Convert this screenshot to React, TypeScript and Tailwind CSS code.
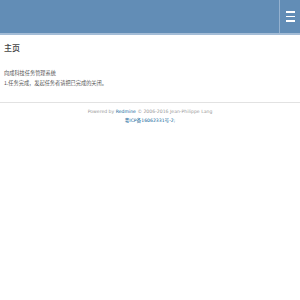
import React from 'react';

const Header: React.FC = () => (
  <div className="flex h-[35px] bg-[#628db6] border-b-2 border-[#a3bcd6]">
    <div className="flex-1" />
    <div className="w-[21px] border-l border-[#94b1cf] flex flex-col items-center pt-[11px] gap-[3px]">
      <span className="block w-[9px] h-[1.5px] bg-white" />
      <span className="block w-[9px] h-[1.5px] bg-white" />
      <span className="block w-[9px] h-[1.5px] bg-white" />
    </div>
  </div>
);

const App: React.FC = () => {
  return (
    <div className="w-[300px] h-[300px] bg-white font-['DejaVu_Sans','Noto_Sans_CJK_SC',sans-serif] overflow-hidden">
      <Header />
      <div className="px-[4px] pt-[8px] pb-[14px]">
        <h2 className="text-[8px] leading-[10px] font-medium text-[#444] font-['Noto_Sans_CJK_SC',sans-serif]">主页</h2>
        <div className="mt-[15px] text-[5.2px] leading-[10px] text-[#555] font-['Noto_Sans_CJK_SC',sans-serif]">
          <p>向成科技任务管理系统</p>
          <p>1.任务完成，发起任务者请把已完成的关闭。</p>
        </div>
      </div>
      <div className="border-t border-[#e2e2e2] pt-[4px] text-center text-[4.6px] leading-[9px] text-[#999]">
        <p>
          Powered by <span className="text-[#169]">Redmine</span> © 2006-2016 Jean-Philippe Lang
        </p>
        <p className="text-[#169]">粤ICP备16062331号-2;</p>
      </div>
    </div>
  );
};

export default App;
